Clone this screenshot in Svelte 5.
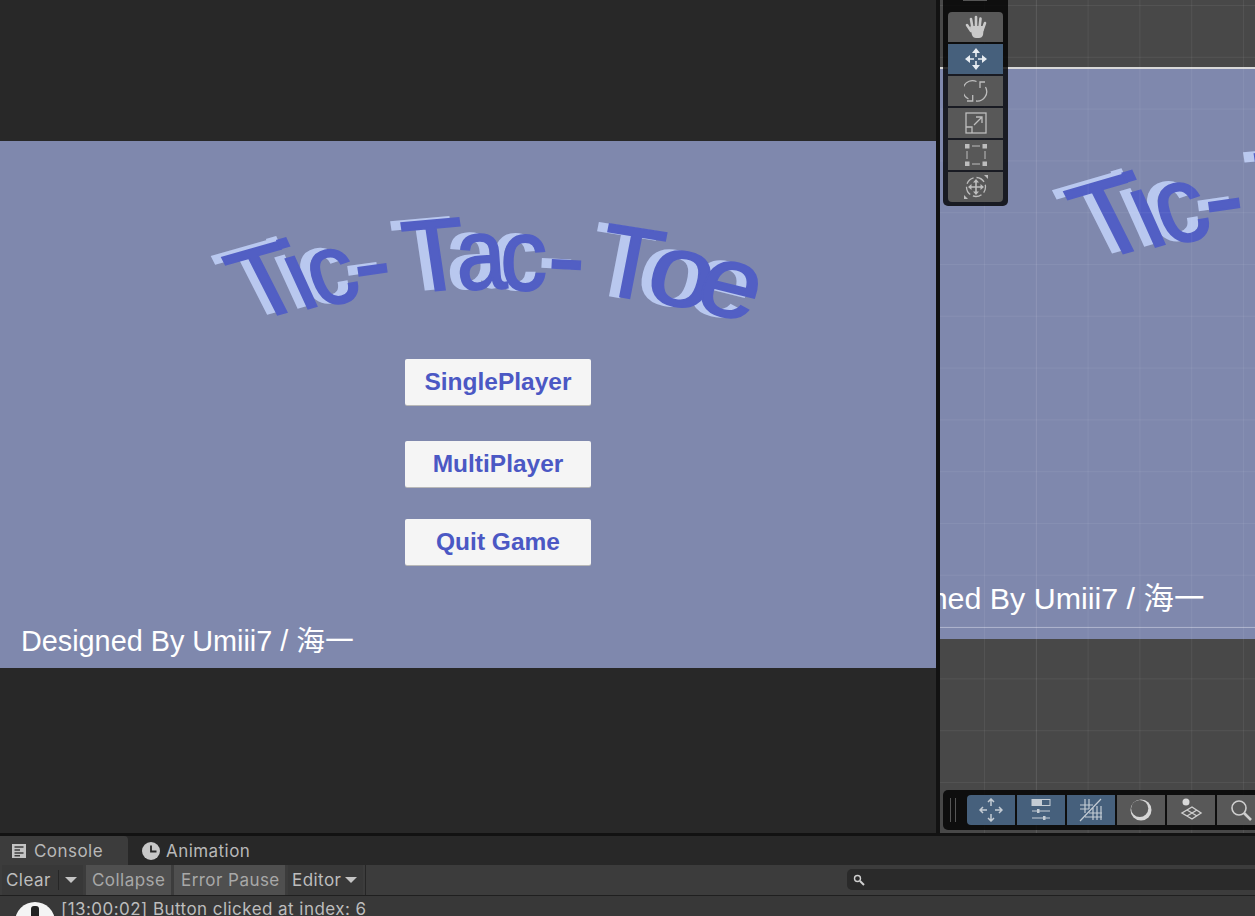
<script>
    // letters of the warped title: baseline centre, rotation, skew, horizontal scale
    const letters = [
        { ch: "T", x: 282.2, y: 313.5, r: -16, k: 11, sx: 1 },
        { ch: "i", x: 312.3, y: 307.3, r: -16, k: 8.5, sx: 1 },
        { ch: "c", x: 342, y: 302.7, r: -14, k: 6, sx: 0.92 },
        { ch: "-", x: 376.3, y: 296.7, r: -8, k: 0, sx: 1.1 },
        { ch: "T", x: 440.3, y: 290, r: -5, k: 3.5, sx: 1 },
        { ch: "a", x: 483, y: 289, r: -2, k: 2, sx: 0.88 },
        { ch: "c", x: 523.8, y: 289.7, r: 0, k: 0, sx: 0.92 },
        { ch: "-", x: 565, y: 291.7, r: 3, k: 0, sx: 1.1 },
        { ch: "T", x: 624.7, y: 297.3, r: 9, k: -2, sx: 1 },
        { ch: "o", x: 674.2, y: 305.3, r: 12, k: -3, sx: 1.15 },
        { ch: "e", x: 721, y: 315.4, r: 14, k: -5, sx: 1.08 },
    ];

    const buttons = [
        { label: "SinglePlayer", gap: 0 },
        { label: "MultiPlayer", gap: 36 },
        { label: "Quit Game", gap: 32 },
    ];
</script>

{#snippet titleLetters()}
    <g class="back">
        {#each letters as l}
            <text transform="translate({l.x - 10} {l.y - 1}) rotate({l.r}) skewX({l.k}) scale({l.sx} 1)">{l.ch}</text>
        {/each}
    </g>
    <g class="front">
        {#each letters as l}
            <text transform="translate({l.x} {l.y}) rotate({l.r}) skewX({l.k}) scale({l.sx} 1)">{l.ch}</text>
        {/each}
    </g>
{/snippet}

<div class="editor">
    <div class="top">
        <section class="game-pane">
            <div class="canvas">
                <svg class="title" width="936" height="218" viewBox="0 141 936 218">
                    {@render titleLetters()}
                </svg>
                <div class="menu">
                    {#each buttons as b}
                        <button class="menu-btn" style="margin-top: {b.gap}px">{b.label}</button>
                    {/each}
                </div>
                <div class="credit">Designed By Umiii7 / 海一</div>
            </div>
        </section>

        <div class="divider"></div>

        <section class="scene-pane">
            <div class="scene-canvas">
                <svg class="title" width="315" height="250" viewBox="940 69 315 250">
                    <g transform="matrix(1.065 0 0 1.08 827.5 -86.6)">
                        {@render titleLetters()}
                    </g>
                </svg>
                <div class="scene-credit">Designed By Umiii7 / 海一</div>
            </div>
            <div class="grid"></div>

            <div class="tools">
                <div class="tools-handle"></div>
                <div class="tool first">
                    <svg width="24" height="24" viewBox="0 0 24 24" fill="#c9c9c9" stroke="#c9c9c9">
                        <path d="M6 12 L8 20 Q9 23 12 23 H15 Q18 23 19 20 L20 11 L7 11 Z" stroke="none" />
                        <path d="M3 10 L7 16 M7 4 L8.5 13 M12 2 L12 13 M16.5 3.5 L15.5 13 M21 8 L18.5 15" stroke-width="2.6" stroke-linecap="round" fill="none" />
                    </svg>
                </div>
                <div class="tool active">
                    <svg width="24" height="24" viewBox="0 0 24 24" fill="#e8edf2" stroke="#e8edf2">
                        <path d="M12 5 V10 M12 14 V19 M5 12 H10 M14 12 H19" stroke-width="1.6" fill="none" />
                        <path d="M12 1 L16 6 H8 Z M12 23 L16 18 H8 Z M1 12 L6 8 V16 Z M23 12 L18 8 V16 Z" stroke="none" />
                    </svg>
                </div>
                <div class="tool">
                    <svg width="24" height="24" viewBox="0 0 24 24" fill="none" stroke="#bdbdbd" stroke-width="1.3">
                        <path d="M12.5 2.5 A9.5 9.5 0 0 0 4.5 20 M21.5 8 A9.5 9.5 0 0 1 12 22" />
                        <path d="M21 3 H16 V9 M3 22 H8.7 V16" />
                    </svg>
                </div>
                <div class="tool">
                    <svg width="24" height="24" viewBox="0 0 24 24" fill="none" stroke="#bdbdbd" stroke-width="1.3">
                        <rect x="2" y="2" width="20" height="20" />
                        <path d="M2 16 H8 V22 M10 14 L18 6 M12 6 H18 V12" />
                    </svg>
                </div>
                <div class="tool">
                    <svg width="24" height="24" viewBox="0 0 24 24" fill="#bdbdbd" stroke="#bdbdbd">
                        <path d="M1 1 h4.5 v4.5 h-4.5 z M18.5 1 h4.5 v4.5 h-4.5 z M1 18.5 h4.5 v4.5 h-4.5 z M18.5 18.5 h4.5 v4.5 h-4.5 z" stroke="none" />
                        <path d="M8 3 H16 M8 21 H16 M3 8 V16 M21 8 V16" stroke-width="1" fill="none" />
                    </svg>
                </div>
                <div class="tool last">
                    <svg width="26" height="26" viewBox="0 0 26 26" fill="#bdbdbd" stroke="#bdbdbd">
                        <circle cx="13" cy="13" r="9.5" fill="none" stroke-width="1.3" stroke-dasharray="9 3" stroke-dashoffset="3" />
                        <path d="M13 7 V19 M7 13 H19" stroke-width="1.6" fill="none" />
                        <path d="M13 5 L16 8.5 H10 Z M13 21 L16 17.5 H10 Z M5 13 L8.5 10 V16 Z M21 13 L17.5 10 V16 Z" stroke="none" />
                        <path d="M25 1 V5 L21 1 Z M1 25 V21 L5 25 Z" stroke="none" />
                    </svg>
                </div>
            </div>

            <div class="overlays">
                <div class="grip"></div>
                <div class="ov on first-ov">
                    <svg width="24" height="24" viewBox="0 0 24 24" fill="none" stroke="#c4ccd4">
                        <path d="M12 1 V8 M9 4 L12 1 L15 4 M12 16 V23 M9 20 L12 23 L15 20 M1 12 H8 M4 9 L1 12 L4 15 M16 12 H23 M20 9 L23 12 L20 15" stroke-width="1.5" />
                    </svg>
                </div>
                <div class="ov on">
                    <svg width="24" height="24" viewBox="0 0 24 24" fill="#c4ccd4" stroke="#c4ccd4">
                        <path d="M3 1.5 H13 V7.5 H3 Z" stroke="none" />
                        <rect x="3" y="1.5" width="18" height="6" fill="none" stroke-width="1" />
                        <path d="M3 13 H21 M3 20 H21" stroke-width="1.2" fill="none" />
                        <rect x="8" y="11" width="2.5" height="4" stroke="none" />
                        <rect x="14" y="18" width="2.5" height="4" stroke="none" />
                    </svg>
                </div>
                <div class="ov on">
                    <svg width="24" height="24" viewBox="0 0 24 24" fill="none" stroke="#c4ccd4" stroke-width="1.2">
                        <path d="M1 23 L22 1 M6 1 V15 M10 1 V11 M1 7 H14 M1 11 H10 M14 9 V22 M18 8 V22 M22 8 V22 M10 15 H23 M6 19 H23" />
                    </svg>
                </div>
                <div class="ov">
                    <svg width="24" height="24" viewBox="0 0 24 24">
                        <circle cx="12" cy="12" r="10.5" fill="#d6d6d6" />
                        <ellipse cx="10.7" cy="10.5" rx="8.6" ry="8.6" fill="#5a5a5a" />
                    </svg>
                </div>
                <div class="ov">
                    <svg width="24" height="24" viewBox="0 0 24 24" fill="none" stroke="#cfcfcf" stroke-width="1.4">
                        <circle cx="7" cy="4" r="3.5" fill="#d8d8d8" stroke="none" />
                        <path d="M13 9 L22 15 L13 21 L3 15 Z M8 12 L18 18 M18 12 L8 18" />
                    </svg>
                </div>
                <div class="ov">
                    <svg width="24" height="24" viewBox="0 0 24 24" fill="none" stroke="#cfcfcf" stroke-width="1.6">
                        <circle cx="10" cy="10" r="7" />
                        <path d="M15 15 L22 22" stroke-width="2.6" />
                    </svg>
                </div>
            </div>
        </section>
    </div>

    <section class="console">
        <div class="tabs">
            <div class="tab active">
                <svg width="16" height="16" viewBox="0 0 16 16">
                    <path fill="#c4c4c4" d="M1 1 H15 V15 H1 Z" />
                    <path stroke="#3c3c3c" stroke-width="1.4" d="M3.5 4 H12.5 M3.5 7 H9 M3.5 10 H12.5 M3.5 12.7 H9" />
                </svg>
                Console
            </div>
            <div class="tab">
                <svg width="18" height="18" viewBox="0 0 18 18">
                    <circle cx="9" cy="9" r="9" fill="#c8c8c8" />
                    <path stroke="#282828" stroke-width="1.8" fill="none" d="M9 3.5 V9.5 H14.5" />
                </svg>
                Animation
            </div>
        </div>
        <div class="bar">
            <div class="bar-btn clear">
                <span class="clear-label">Clear</span>
                <span class="arrow"></span>
            </div>
            <div class="bar-btn toggled collapse">Collapse</div>
            <div class="bar-btn toggled pause">Error Pause</div>
            <div class="bar-btn editor-btn">Editor<span class="arrow"></span></div>
            <div class="spacer"></div>
            <div class="search">
                <svg width="12" height="12" viewBox="0 0 12 12" fill="none" stroke="#d0d0d0" stroke-width="1.4">
                    <circle cx="4.5" cy="4.5" r="3" />
                    <path d="M7 7 L11 11" stroke-width="2" />
                </svg>
            </div>
        </div>
        <div class="log">
            <div class="log-icon"><span></span></div>
            <div class="log-text">[13:00:02] Button clicked at index: 6</div>
        </div>
    </section>
</div>

<style>
    :global(body) {
        margin: 0;
        background: #282828;
    }

    .editor {
        width: 1255px;
        height: 916px;
        display: flex;
        flex-direction: column;
        overflow: hidden;
        font-family: Inter, "Liberation Sans", sans-serif;
    }

    .top {
        display: flex;
        height: 833px;
        flex: none;
    }

    .game-pane {
        width: 936px;
        background: #282828;
        padding-top: 141px;
        box-sizing: border-box;
    }

    .canvas {
        height: 527px;
        background: #7f88ad;
        display: flex;
        flex-direction: column;
    }

    .title {
        display: block;
        flex: none;
    }

    .title text {
        font-family: "Liberation Sans", Arial, sans-serif;
        font-size: 102px;
        text-anchor: middle;
        stroke-width: 1.8px;
    }

    .back {
        fill: #b9c8ef;
        stroke: #b9c8ef;
    }

    .front {
        fill: #525fc4;
        stroke: #525fc4;
    }

    .menu {
        display: flex;
        flex-direction: column;
        align-items: flex-start;
        padding-left: 405px;
    }

    .menu-btn {
        width: 186px;
        height: 46px;
        border: none;
        border-radius: 2px;
        padding: 0;
        background: #f5f5f5;
        box-shadow: 0 1px 0 #b8b8b8;
        color: #4b58c4;
        font-family: "Liberation Sans", Arial, sans-serif;
        font-weight: 700;
        font-size: 24.5px;
    }

    .credit {
        margin-top: auto;
        padding: 0 0 10px 21px;
        color: #fff;
        font-family: "Liberation Sans", "Noto Sans CJK SC", sans-serif;
        font-size: 28.8px;
        line-height: 33px;
    }

    .divider {
        width: 4px;
        background: #121212;
    }

    .scene-pane {
        flex: 1;
        position: relative;
        background: #484848;
        overflow: hidden;
        padding-top: 67px;
        box-sizing: border-box;
    }

    .scene-canvas {
        height: 572px;
        background: #7f88ad;
        border-top: 2px solid #d8d8d8;
        box-sizing: border-box;
        overflow: hidden;
    }

    .scene-credit {
        margin: 262px 0 0 -87px;
        padding-bottom: 12px;
        border-bottom: 1px solid #a9afca;
        color: #fff;
        font-family: "Liberation Sans", "Noto Sans CJK SC", sans-serif;
        font-size: 30.4px;
        line-height: 34px;
        white-space: nowrap;
    }

    .grid {
        position: absolute;
        inset: 0;
        background-image:
            linear-gradient(to right, rgba(255, 255, 255, 0.06) 1px, transparent 1px),
            linear-gradient(to bottom, rgba(255, 255, 255, 0.06) 1px, transparent 1px),
            linear-gradient(to right, rgba(255, 255, 255, 0.05) 1px, transparent 1px);
        background-size: 51.8px 51.8px, 51.8px 51.8px, 518px 100%;
        background-position: 44px 5px, 44px 5px, 96px 0;
    }

    .tools {
        position: absolute;
        left: 3px;
        top: -1px;
        width: 65px;
        height: 207px;
        box-sizing: border-box;
        padding: 13px 5px 0;
        background: rgba(0, 0, 0, 0.8);
        border-radius: 0 0 5px 5px;
        display: flex;
        flex-direction: column;
        gap: 2px;
    }

    .tools-handle {
        position: absolute;
        left: 20px;
        top: 0;
        width: 24px;
        height: 2px;
        background: #555;
    }

    .tool {
        height: 30px;
        flex: none;
        background: #585858;
        display: flex;
        align-items: center;
        justify-content: center;
    }

    .tool.first {
        border-radius: 4px 4px 0 0;
    }

    .tool.last {
        border-radius: 0 0 4px 4px;
    }

    .tool.active,
    .ov.on {
        background: #46607c;
    }

    .overlays {
        position: absolute;
        left: 3px;
        top: 790px;
        width: 330px;
        height: 40px;
        box-sizing: border-box;
        padding: 5px 0 5px 24px;
        background: rgba(0, 0, 0, 0.8);
        border-radius: 5px 0 0 5px;
        display: flex;
        gap: 2px;
    }

    .grip {
        position: absolute;
        left: 7px;
        top: 8px;
        width: 6px;
        height: 24px;
        box-sizing: border-box;
        border-left: 1px solid #555;
        border-right: 1px solid #555;
    }

    .ov {
        width: 48px;
        flex: none;
        background: #585858;
        display: flex;
        align-items: center;
        justify-content: center;
    }

    .first-ov {
        border-radius: 4px 0 0 4px;
    }

    .console {
        flex: 1;
        display: flex;
        flex-direction: column;
        border-top: 3px solid #121212;
        background: #3a3a3a;
        color: #bdbdbd;
        font-size: 17px;
        letter-spacing: 0.45px;
        overflow: hidden;
    }

    .tabs {
        height: 29px;
        flex: none;
        display: flex;
        background: #282828;
    }

    .tab {
        display: flex;
        align-items: center;
        gap: 6px;
        padding: 0 0 0 14px;
        width: 128px;
        box-sizing: border-box;
        color: #b8b8b8;
    }

    .tab.active {
        padding-left: 11px;
        gap: 7px;
        background: #3c3c3c;
        border-radius: 0 4px 0 0;
    }

    .bar {
        height: 31px;
        flex: none;
        display: flex;
        background: #3c3c3c;
        border-bottom: 1px solid #1f1f1f;
        box-sizing: border-box;
    }

    .bar-btn {
        display: flex;
        align-items: center;
        flex: none;
        margin-left: 3px;
        background: #383838;
        padding-left: 4px;
        box-sizing: border-box;
        height: 30px;
    }

    .clear {
        width: 81px;
        margin-left: 2px;
    }

    .clear-label {
        width: 52px;
        border-right: 1px solid #262626;
        flex: none;
    }

    .clear .arrow {
        margin-left: 6px;
    }

    .arrow {
        width: 0;
        height: 0;
        border-left: 6px solid transparent;
        border-right: 6px solid transparent;
        border-top: 6px solid #c4c4c4;
        display: inline-block;
    }

    .toggled {
        background: #4f4f4f;
        color: #a8a8a8;
    }

    .collapse {
        width: 85px;
        padding-left: 6px;
    }

    .pause {
        width: 111px;
        padding-left: 7px;
    }

    .editor-btn {
        width: 75px;
        gap: 4px;
    }

    .spacer {
        width: 481px;
        flex: none;
        border-left: 1px solid #262626;
        margin-left: 2px;
    }

    .search {
        flex: 1;
        margin-top: 4px;
        height: 21px;
        background: #2a2a2a;
        border-radius: 5px 0 0 5px;
        display: flex;
        align-items: center;
        padding-left: 6px;
    }

    .log {
        flex: 1;
        display: flex;
        position: relative;
        background: #383838;
    }

    .log-icon {
        position: absolute;
        left: 15px;
        top: 6px;
        width: 40px;
        height: 40px;
        border-radius: 50%;
        background: #f4f4f4;
        display: flex;
        justify-content: center;
    }

    .log-icon span {
        width: 8px;
        height: 22px;
        margin-top: 4px;
        border-radius: 3px;
        background: #222;
    }

    .log-text {
        margin-left: 61px;
        margin-top: 3px;
        line-height: 20px;
    }
</style>
